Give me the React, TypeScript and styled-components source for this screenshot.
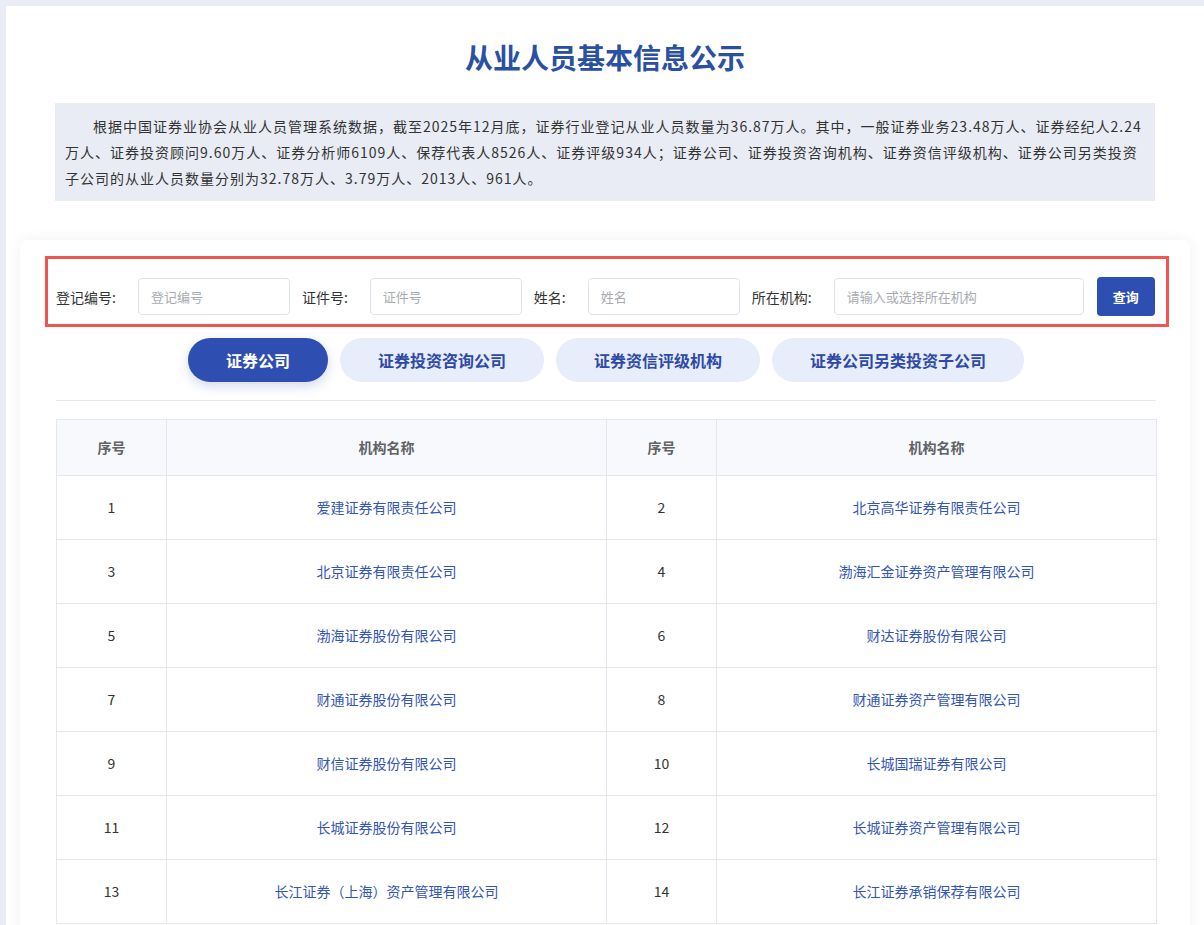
import styled, { createGlobalStyle } from "styled-components";

const GlobalStyle = createGlobalStyle`
  html, body {
    margin: 0;
    padding: 0;
    background: #eaedf5;
  }
  body {
    font-family: "Noto Sans CJK SC", "Noto Sans", sans-serif;
    color: #333;
  }
  * {
    box-sizing: border-box;
  }
`;

const Page = styled.div`
  padding: 6px 0 0 6px;
`;

const Main = styled.main`
  background: #fff;
  padding: 34px 14px 40px;
`;

const Title = styled.h1`
  margin: 0;
  text-align: center;
  font-size: 28px;
  line-height: 34px;
  font-weight: 700;
  color: #2a50a2;
`;

const Intro = styled.p`
  width: 1100px;
  margin: 29px auto 0;
  padding: 10px;
  background: #e9ecf4;
  font-size: 14px;
  line-height: 26px;
  letter-spacing: 1px;
  text-indent: 2em;
  color: #333;
`;

const Card = styled.section`
  margin-top: 39px;
  background: #fff;
  border-radius: 8px;
  box-shadow: 0 0 14px rgba(40, 50, 90, 0.07);
  padding: 16px 21px 24px 25px;
`;

const FilterBar = styled.form`
  display: flex;
  align-items: center;
  gap: 12px;
  border: 3px solid #f25454;
  padding: 18px 10px 8px 8px;
`;

const Field = styled.label`
  display: flex;
  align-items: center;
`;

const FieldName = styled.span`
  font-size: 14px;
  line-height: 20px;
  color: #333;
  margin-right: 22px;
  white-space: nowrap;
`;

const Input = styled.input<{ $width: number }>`
  width: ${(p) => p.$width}px;
  height: 37px;
  border: 1px solid #dde2ee;
  border-radius: 4px;
  padding: 0 12px;
  font-family: inherit;
  font-size: 13px;
  color: #333;
  outline: none;
  &::placeholder {
    color: #a8abb2;
  }
`;

const SearchButton = styled.button`
  margin-left: 1px;
  height: 39px;
  padding: 0 16px;
  border: none;
  border-radius: 4px;
  background: #2e4fb1;
  color: #fff;
  font-family: inherit;
  font-size: 13px;
  font-weight: 700;
  cursor: pointer;
`;

const Inner = styled.div`
  margin: 0 13px 0 11px;
`;

const Tabs = styled.div`
  display: flex;
  justify-content: center;
  gap: 12px;
  margin-top: 11px;
  padding-bottom: 18px;
  border-bottom: 1px solid #e6e9f4;
`;

const Tab = styled.button<{ $active?: boolean }>`
  height: 44px;
  padding: 0 38px;
  border: none;
  border-radius: 22px;
  font-family: inherit;
  font-size: 16px;
  font-weight: 700;
  cursor: pointer;
  background: ${(p) => (p.$active ? "#2f4eb1" : "#e8edfb")};
  color: ${(p) => (p.$active ? "#fff" : "#2e4aa8")};
  box-shadow: ${(p) =>
    p.$active ? "0 4px 12px rgba(47, 78, 177, 0.22)" : "none"};
`;

const Table = styled.table`
  width: 100%;
  margin-top: 18px;
  border-collapse: collapse;
  table-layout: fixed;
  font-size: 14px;
`;

const HeadCell = styled.th`
  height: 56px;
  padding: 0 0 2px;
  background: #f8f9fd;
  border: 1px solid #e4e7f0;
  color: #606266;
  font-weight: 700;
  text-align: center;
  vertical-align: middle;
`;

const Cell = styled.td<{ $link?: boolean }>`
  height: 64px;
  padding: 0 0 2px;
  border: 1px solid #e4e7f0;
  text-align: center;
  vertical-align: middle;
  color: ${(p) => (p.$link ? "#3355b5" : "#333")};
  cursor: ${(p) => (p.$link ? "pointer" : "default")};
`;

const tabs = ["证券公司", "证券投资咨询公司", "证券资信评级机构", "证券公司另类投资子公司"];

const orgs = [
  "爱建证券有限责任公司",
  "北京高华证券有限责任公司",
  "北京证券有限责任公司",
  "渤海汇金证券资产管理有限公司",
  "渤海证券股份有限公司",
  "财达证券股份有限公司",
  "财通证券股份有限公司",
  "财通证券资产管理有限公司",
  "财信证券股份有限公司",
  "长城国瑞证券有限公司",
  "长城证券股份有限公司",
  "长城证券资产管理有限公司",
  "长江证券（上海）资产管理有限公司",
  "长江证券承销保荐有限公司",
];

const rows: [number, string][][] = [];
for (let i = 0; i < orgs.length; i += 2) {
  rows.push([
    [i + 1, orgs[i]],
    [i + 2, orgs[i + 1]],
  ]);
}

export default function App() {
  return (
    <Page>
      <GlobalStyle />
      <Main>
        <Title>从业人员基本信息公示</Title>
        <Intro>
          根据中国证券业协会从业人员管理系统数据，截至2025年12月底，证券行业登记从业人员数量为36.87万人。其中，一般证券业务23.48万人、证券经纪人2.24万人、证券投资顾问9.60万人、证券分析师6109人、保荐代表人8526人、证券评级934人；证券公司、证券投资咨询机构、证券资信评级机构、证券公司另类投资子公司的从业人员数量分别为32.78万人、3.79万人、2013人、961人。
        </Intro>
        <Card>
          <FilterBar onSubmit={(e) => e.preventDefault()}>
            <Field>
              <FieldName>登记编号:</FieldName>
              <Input $width={152} placeholder="登记编号" />
            </Field>
            <Field>
              <FieldName>证件号:</FieldName>
              <Input $width={152} placeholder="证件号" />
            </Field>
            <Field>
              <FieldName>姓名:</FieldName>
              <Input $width={152} placeholder="姓名" />
            </Field>
            <Field>
              <FieldName>所在机构:</FieldName>
              <Input $width={250} placeholder="请输入或选择所在机构" />
            </Field>
            <SearchButton type="submit">查询</SearchButton>
          </FilterBar>
          <Inner>
            <Tabs>
              {tabs.map((t, i) => (
                <Tab key={t} $active={i === 0}>
                  {t}
                </Tab>
              ))}
            </Tabs>
            <Table>
              <colgroup>
                <col style={{ width: 110 }} />
                <col style={{ width: 440 }} />
                <col style={{ width: 110 }} />
                <col style={{ width: 440 }} />
              </colgroup>
              <thead>
                <tr>
                  <HeadCell>序号</HeadCell>
                  <HeadCell>机构名称</HeadCell>
                  <HeadCell>序号</HeadCell>
                  <HeadCell>机构名称</HeadCell>
                </tr>
              </thead>
              <tbody>
                {rows.map((pair) => (
                  <tr key={pair[0][0]}>
                    {pair.map(([n, name]) => [
                      <Cell key={`n${n}`}>{n}</Cell>,
                      <Cell key={`o${n}`} $link>
                        {name}
                      </Cell>,
                    ])}
                  </tr>
                ))}
              </tbody>
            </Table>
          </Inner>
        </Card>
      </Main>
    </Page>
  );
}
